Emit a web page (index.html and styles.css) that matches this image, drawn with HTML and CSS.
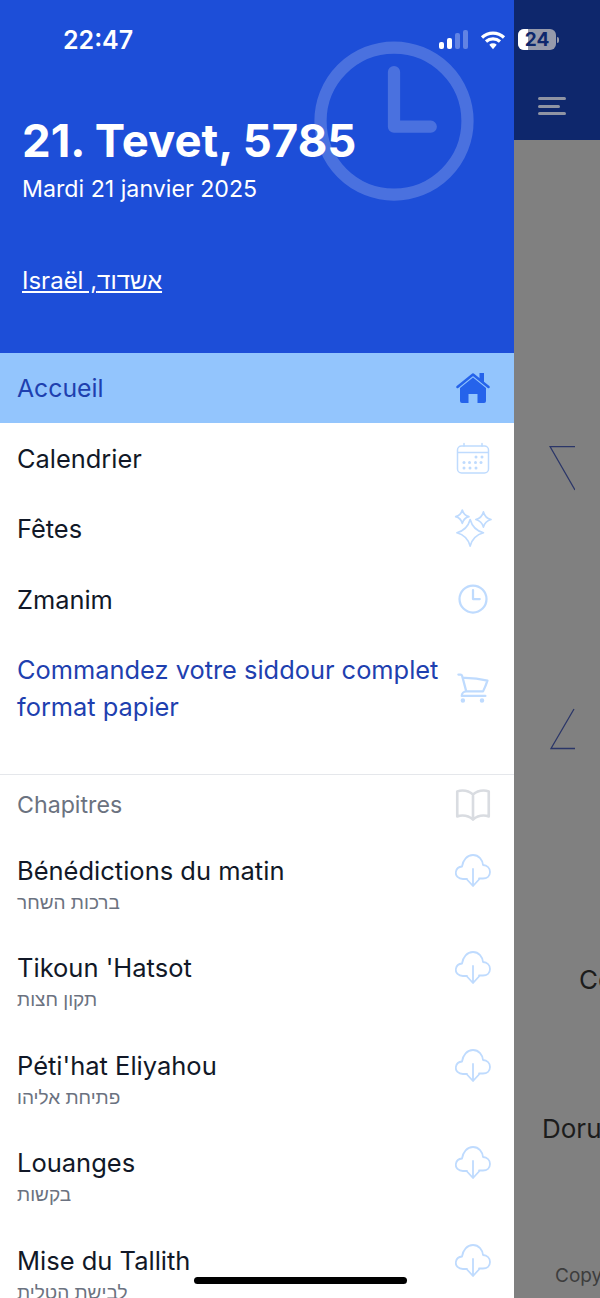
FILE: index.html
```html
<!DOCTYPE html>
<html lang="fr">
<head>
  <meta charset="utf-8">
  <title>Siddour</title>
  <link rel="stylesheet" href="styles.css">
</head>
<body>
  <svg class="sprites" width="0" height="0">
    <symbol id="i-cloud" viewBox="0 0 36 34"><path d="M12 25H8C3.500 25 .2 22 .9 17.800 1.500 14.500 4 12.800 7 12.500 8 6 12 1 18 1c6 0 9.500 5 10 10 4 .3 7 3 7 7 0 4-3 6.500-7 6.500h-4M18 15v16M12 25.500l6 6.500 6-6.500"/></symbol>
  </svg>

  <div class="screen">
    <!-- Side drawer -->
    <aside class="drawer">
      <header class="drawer-head">
        <svg class="head-clock" viewBox="0 0 24 24"><path d="M12 6v6.700h4.500M21 12a9 9 0 1 1-18 0 9 9 0 0 1 18 0Z"/></svg>
        <h1 class="head-title">21. Tevet, 5785</h1>
        <p class="head-date">Mardi 21 janvier 2025</p>
        <a class="head-place" href="#">Israël ,אשדוד</a>
      </header>

      <nav class="menu">
        <a class="row row-active" href="#">
          <span>Accueil</span>
          <svg class="icon-home" viewBox="0 0 34 32">
            <path class="home-roof" d="M1.500 15 17 2.500 32.500 15"/>
            <path class="home-fill" d="M23.500 1H28v11l-4.500-3.500ZM4 16 17 5.500 30 16v13a2 2 0 0 1-2 2h-6.500v-9h-9v9H6a2 2 0 0 1-2-2Z"/>
          </svg>
        </a>
        <a class="row" href="#">
          <span>Calendrier</span>
          <svg class="icon" viewBox="0 0 36 36">
            <rect x="2.500" y="5" width="31" height="27" rx="4"/>
            <path d="M3 11.500h30M9 2.500V5M27 2.500V5"/>
            <g class="dots">
              <circle cx="21" cy="16" r="1.500"/><circle cx="27" cy="16" r="1.500"/>
              <circle cx="9" cy="21.500" r="1.500"/><circle cx="14.500" cy="21.500" r="1.500"/><circle cx="20.500" cy="21.500" r="1.500"/><circle cx="26" cy="21.500" r="1.500"/>
              <circle cx="9" cy="27" r="1.500"/><circle cx="15" cy="27" r="1.500"/><circle cx="21" cy="27" r="1.500"/>
            </g>
          </svg>
        </a>
        <a class="row" href="#">
          <span>Fêtes</span>
          <svg class="icon icon-stars" viewBox="-1 -1 38 38">
            <path d="M15 8Q18 19 29 22 18 25 15 36 12 25 1 22 12 19 15 8Z"/>
            <path d="M6.700-2Q8.200 3.500 13.700 5 8.200 6.500 6.700 12 5.200 6.500-.3 5 5.200 3.500 6.700-2Z"/>
            <path d="M29 0Q30.700 6.300 37 8 30.700 9.700 29 16 27.300 9.700 21 8 27.300 6.300 29 0Z"/>
          </svg>
        </a>
        <a class="row" href="#">
          <span>Zmanim</span>
          <svg class="icon" viewBox="0 0 24 24"><path d="M12 6v6h4.500m4.500 0a9 9 0 1 1-18 0 9 9 0 0 1 18 0Z"/></svg>
        </a>
        <a class="row row-order" href="#">
          <span>Commandez votre siddour complet format papier</span>
          <svg class="icon" viewBox="0 0 24 24"><path d="M2.250 3h1.386c.51 0 .955.343 1.087.835l.383 1.437M7.500 14.250a3 3 0 0 0-3 3h15.750m-12.750-3h11.218c1.121-2.300 2.100-4.684 2.924-7.138a60.114 60.114 0 0 0-16.536-1.840M7.500 14.250 5.106 5.272M6 20.250a.75.75 0 1 1-1.500 0 .75.75 0 0 1 1.500 0Zm12.750 0a.75.75 0 1 1-1.500 0 .75.75 0 0 1 1.500 0Z"/></svg>
        </a>
      </nav>

      <section class="chapters">
        <div class="chapters-head">
          <span>Chapitres</span>
          <svg class="icon icon-book" viewBox="0 0 24 24"><path d="M12 6.042A8.967 8.967 0 0 0 6 3.750c-1.052 0-2.062.18-3 .512v14.250A8.987 8.987 0 0 1 6 18c2.305 0 4.408.867 6 2.292m0-14.250a8.966 8.966 0 0 1 6-2.292c1.052 0 2.062.18 3 .512v14.250A8.987 8.987 0 0 0 18 18a8.967 8.967 0 0 0-6 2.292m0-14.250v14.250"/></svg>
        </div>
        <div class="chapter">
          <div><div class="chapter-name">Bénédictions du matin</div><div class="chapter-he">ברכות השחר</div></div>
          <svg class="icon icon-cloud"><use href="#i-cloud"/></svg>
        </div>
        <div class="chapter">
          <div><div class="chapter-name">Tikoun 'Hatsot</div><div class="chapter-he">תקון חצות</div></div>
          <svg class="icon icon-cloud"><use href="#i-cloud"/></svg>
        </div>
        <div class="chapter">
          <div><div class="chapter-name">Péti'hat Eliyahou</div><div class="chapter-he">פתיחת אליהו</div></div>
          <svg class="icon icon-cloud"><use href="#i-cloud"/></svg>
        </div>
        <div class="chapter">
          <div><div class="chapter-name">Louanges</div><div class="chapter-he">בקשות</div></div>
          <svg class="icon icon-cloud"><use href="#i-cloud"/></svg>
        </div>
        <div class="chapter">
          <div><div class="chapter-name">Mise du Tallith</div><div class="chapter-he">לבישת הטלית</div></div>
          <svg class="icon icon-cloud"><use href="#i-cloud"/></svg>
        </div>
      </section>
    </aside>

    <!-- Page dimmed behind the drawer -->
    <main class="behind">
      <div class="behind-bar">
        <div class="burger"><i></i><i class="short"></i><i></i></div>
      </div>
      <div class="behind-body">
        <svg class="shape shape-top" viewBox="0 0 26 46"><path d="M26 .5H1L26 44"/></svg>
        <svg class="shape shape-bottom" viewBox="0 0 26 42"><path d="M25 1 2 40.500h24"/></svg>
        <p class="behind-text text-co">Co</p>
        <p class="behind-text text-dorun">Dorun</p>
        <p class="behind-copy">Copy</p>
      </div>
    </main>

    <!-- Phone status bar -->
    <div class="status">
      <span class="status-time">22:47</span>
      <div class="signal"><i class="b1"></i><i class="b2"></i><i class="b3"></i><i class="b4"></i></div>
      <svg class="wifi" viewBox="0 0 26 20"><path d="M2 7.500a16 16 0 0 1 22 0M6 11.500a10.500 10.500 0 0 1 14 0"/><path class="wifi-dot" d="M9.300 14.800a5.500 5.500 0 0 1 7.400 0L13 19.200Z"/></svg>
      <div class="battery"><span class="battery-level"></span><span class="battery-num">24</span></div>
      <span class="battery-tip"></span>
    </div>
    <div class="home-bar"></div>
  </div>
</body>
</html>
```

FILE: styles.css
```css
* {
  box-sizing: border-box;
}

html, body {
  margin: 0;
  padding: 0;
}

body {
  font-family: Inter, "Liberation Sans", sans-serif;
  color: #111827;
}

a {
  color: inherit;
  text-decoration: none;
}

.sprites {
  position: absolute;
}

.screen {
  position: relative;
  display: flex;
  width: 600px;
  height: 1298px;
  overflow: hidden;
}

.drawer {
  width: 514px;
  flex-shrink: 0;
  background-color: #fff;
}

.drawer-head {
  position: relative;
  height: 353px;
  padding: 113px 0 0 22px;
  background-color: #1d4ed8;
  color: #fff;
}

.head-clock {
  position: absolute;
  left: 296px;
  top: 23px;
  width: 196px;
  height: 196px;
  fill: none;
  stroke: #fff;
  stroke-opacity: 0.2;
  stroke-width: 1.5;
  stroke-linecap: round;
  stroke-linejoin: round;
}

.head-title {
  position: relative;
  margin: 0;
  font-size: 45.5px;
  font-weight: 700;
  line-height: 56px;
}

.head-date {
  margin: 3px 0 0;
  font-size: 23.2px;
  line-height: 34px;
}

.head-place {
  display: inline-block;
  margin-top: 58px;
  font-size: 24px;
  line-height: 34px;
  text-decoration: underline;
}

.row {
  display: flex;
  align-items: center;
  justify-content: space-between;
  height: 70.4px;
  padding: 0 23px 0 17px;
  font-size: 25.4px;
}

.row-active {
  background-color: #93c5fd;
  color: #1e40af;
  font-size: 24.8px;
}

.row-order {
  height: 139px;
  padding-bottom: 32px;
  color: #1e40af;
  line-height: 37px;
}

.row-order span {
  width: 436px;
}

.icon {
  width: 36px;
  height: 36px;
  flex-shrink: 0;
  overflow: visible;
  fill: none;
  stroke: #bfdbfe;
  stroke-width: 1.5;
  stroke-linecap: round;
  stroke-linejoin: round;
}

.dots circle {
  fill: #bfdbfe;
  stroke: none;
}

.icon-stars {
  stroke-width: 1.8;
}

.icon-book {
  width: 42px;
  height: 42px;
  margin-right: -3px;
  stroke: #d9dce1;
}

.icon-cloud {
  stroke-width: 1.8;
}

.icon-home {
  width: 34px;
  height: 32px;
  margin-right: 1px;
  flex-shrink: 0;
}

.home-roof {
  fill: none;
  stroke: #2563eb;
  stroke-width: 2.5;
  stroke-linecap: round;
  stroke-linejoin: round;
}

.home-fill {
  fill: #2563eb;
}

.chapters {
  border-top: 1px solid #e5e7eb;
}

.chapters-head {
  display: flex;
  align-items: center;
  justify-content: space-between;
  height: 60px;
  padding: 0 23px 0 17px;
  font-size: 23.2px;
  color: #6b7280;
}

.chapter {
  display: flex;
  align-items: flex-start;
  justify-content: space-between;
  height: 97.5px;
  padding: 17px 23px 0 17px;
}

.chapter-name {
  font-size: 25.5px;
  line-height: 37px;
}

.chapter-he {
  margin-top: 1px;
  font-family: "Liberation Sans", sans-serif;
  font-size: 19px;
  line-height: 26px;
  color: #6b7280;
  text-align: left;
  unicode-bidi: plaintext;
}

.chapter .icon {
  margin-top: 1px;
}

.behind {
  flex: 1;
  min-width: 0;
  overflow: hidden;
}

.behind-bar {
  height: 140px;
  padding: 97px 0 0 24px;
  background-color: #0e276c;
}

.burger i {
  display: block;
  width: 28px;
  height: 3px;
  margin-bottom: 4.5px;
  border-radius: 2px;
  background-color: #8f94a3;
}

.burger i.short {
  width: 22px;
}

.behind-body {
  height: 1158px;
  overflow: hidden;
  background-color: #808080;
}

.shape {
  display: block;
  width: 26px;
  fill: none;
  stroke: #2b3668;
  stroke-width: 1.3;
}

.shape-top {
  height: 46px;
  margin: 306px 0 0 35px;
}

.shape-bottom {
  height: 42px;
  margin: 216px 0 0 35px;
}

.behind-text {
  margin: 0;
  font-size: 26px;
  line-height: 32px;
  white-space: nowrap;
  color: #1c1c1c;
}

.text-co {
  margin: 214px 0 0 65px;
}

.text-dorun {
  margin: 117px 0 0 28px;
}

.behind-copy {
  margin: 119px 0 0 41px;
  font-size: 19px;
  line-height: 24px;
  white-space: nowrap;
  color: #3d3d3d;
}

/* Status bar */
.status {
  position: absolute;
  left: 0;
  top: 0;
  width: 600px;
  height: 60px;
  color: #fff;
}

.status-time {
  position: absolute;
  left: 63px;
  top: 24px;
  font-size: 25px;
  font-weight: 600;
  line-height: 32px;
}

.signal {
  position: absolute;
  left: 439px;
  top: 30px;
  display: flex;
  align-items: flex-end;
  gap: 3px;
  height: 19px;
}

.signal i {
  display: block;
  width: 5px;
  border-radius: 2px;
  background-color: #fff;
}

.signal .b1 { height: 7px; }
.signal .b2 { height: 11px; }
.signal .b3 { height: 16px; opacity: 0.3; }
.signal .b4 { height: 19px; opacity: 0.3; }

.wifi {
  position: absolute;
  left: 480px;
  top: 30px;
  width: 26px;
  height: 20px;
  fill: none;
  stroke: #fff;
  stroke-width: 3.2;
}

.wifi-dot {
  fill: #fff;
  stroke: none;
}

.battery {
  position: absolute;
  left: 518px;
  top: 29px;
  width: 38px;
  height: 21px;
  overflow: hidden;
  border-radius: 6px;
  background-color: #969aab;
}

.battery-level {
  position: absolute;
  left: 0;
  top: 0;
  width: 10px;
  height: 21px;
  background-color: #fff;
}

.battery-num {
  position: relative;
  display: block;
  font-size: 19px;
  font-weight: 700;
  line-height: 21px;
  text-align: center;
  color: #0e276c;
}

.battery-tip {
  position: absolute;
  left: 557px;
  top: 37px;
  width: 2px;
  height: 6px;
  border-radius: 0 2px 2px 0;
  background-color: #969aab;
}

.home-bar {
  position: absolute;
  left: 194px;
  top: 1277px;
  width: 213px;
  height: 7px;
  border-radius: 4px;
  background-color: #000;
}
```
